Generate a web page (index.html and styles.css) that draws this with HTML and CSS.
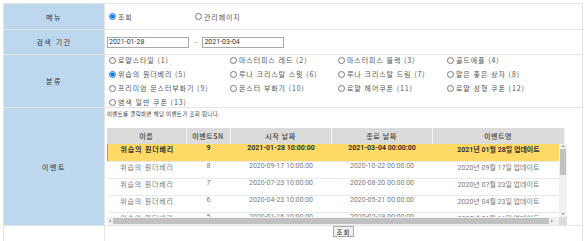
FILE: index.html
```html
<!DOCTYPE html>
<html lang="ko">
  <head>
    <meta charset="UTF-8">
    <title>이벤트 조회</title>
    <link rel="stylesheet" href="styles.css">
  </head>
  <body>
    <table class="frame">
      <tr class="row-menu">
        <th>메뉴</th>
        <td>
          <div class="menu-opts">
            <label class="opt"><input type="radio" name="menu" checked>조회</label>
            <label class="opt"><input type="radio" name="menu">관리페이지</label>
          </div>
        </td>
      </tr>
      <tr class="row-date">
        <th>검색 기간</th>
        <td>
          <div class="dates">
            <input type="text" class="date" value="2021-01-28">
            <span class="dash">-</span>
            <input type="text" class="date" value="2021-03-04">
          </div>
        </td>
      </tr>
      <tr class="row-cat">
        <th>분류</th>
        <td>
          <div class="cats">
            <label class="opt"><input type="radio" name="cat">로얄스타일 (1)</label>
            <label class="opt"><input type="radio" name="cat">마스터피스 레드 (2)</label>
            <label class="opt"><input type="radio" name="cat">마스터피스 블랙 (3)</label>
            <label class="opt"><input type="radio" name="cat">골드애플 (4)</label>
            <label class="opt"><input type="radio" name="cat" checked>위습의 원더베리 (5)</label>
            <label class="opt"><input type="radio" name="cat">루나 크리스탈 스윗 (6)</label>
            <label class="opt"><input type="radio" name="cat">루나 크리스탈 드림 (7)</label>
            <label class="opt"><input type="radio" name="cat">알은 좋은 상자 (8)</label>
            <label class="opt"><input type="radio" name="cat">프리미엄 몬스터부화기 (9)</label>
            <label class="opt"><input type="radio" name="cat">몬스터 부화기 (10)</label>
            <label class="opt"><input type="radio" name="cat">로얄 헤어쿠폰 (11)</label>
            <label class="opt"><input type="radio" name="cat">로얄 성형 쿠폰 (12)</label>
            <label class="opt"><input type="radio" name="cat">염색 일반 쿠폰 (13)</label>
          </div>
        </td>
      </tr>
      <tr class="row-event">
        <th>이벤트</th>
        <td>
          <p class="note">이벤트를 클릭하면 해당 이벤트가 조회 됩니다.</p>
          <div class="grid">
            <table class="grid-head">
              <colgroup>
                <col class="c-name"><col class="c-sn"><col class="c-start"><col class="c-end"><col class="c-title">
              </colgroup>
              <tr>
                <th>이름</th>
                <th>이벤트SN</th>
                <th>시작 날짜</th>
                <th>종료 날짜</th>
                <th>이벤트명</th>
              </tr>
            </table>
            <div class="grid-view">
              <div class="grid-clip">
                <table class="grid-body">
                  <colgroup>
                    <col class="c-name"><col class="c-sn"><col class="c-start"><col class="c-end"><col class="c-title">
                  </colgroup>
                  <tr class="selected">
                    <td>위습의 원더베리</td>
                    <td>9</td>
                    <td>2021-01-28 10:00:00</td>
                    <td>2021-03-04 00:00:00</td>
                    <td>2021년 01월 28일 업데이트</td>
                  </tr>
                  <tr>
                    <td>위습의 원더베리</td>
                    <td>8</td>
                    <td>2020-09-17 10:00:00</td>
                    <td>2020-10-22 00:00:00</td>
                    <td>2020년 09월 17일 업데이트</td>
                  </tr>
                  <tr>
                    <td>위습의 원더베리</td>
                    <td>7</td>
                    <td>2020-07-23 10:00:00</td>
                    <td>2020-08-20 00:00:00</td>
                    <td>2020년 07월 23일 업데이트</td>
                  </tr>
                  <tr>
                    <td>위습의 원더베리</td>
                    <td>6</td>
                    <td>2020-04-23 10:00:00</td>
                    <td>2020-05-21 00:00:00</td>
                    <td>2020년 04월 23일 업데이트</td>
                  </tr>
                  <tr>
                    <td>위습의 원더베리</td>
                    <td>5</td>
                    <td>2020-01-16 10:00:00</td>
                    <td>2020-02-19 00:00:00</td>
                    <td>2020년 01월 16일 업데이트</td>
                  </tr>
                </table>
              </div>
              <div class="vbar">
                <span class="arrow up"></span>
                <span class="vthumb"></span>
                <span class="arrow down"></span>
              </div>
            </div>
            <div class="hbar">
              <span class="arrow left"></span>
              <span class="hthumb"></span>
              <span class="arrow right"></span>
              <span class="corner"></span>
            </div>
          </div>
        </td>
      </tr>
      <tr class="row-btn">
        <th class="blank"></th>
        <td><button class="search">조회</button></td>
      </tr>
    </table>
  </body>
</html>
```

FILE: styles.css
```css
body {
  margin: 0;
  padding: 3px;
  font-family: "Noto Sans CJK KR", "Noto Sans", sans-serif;
  font-size: 7px;
  color: #444;
  background: #fff;
}
.frame {
  width: 580px;
  border-collapse: collapse;
}
.frame > tbody > tr > th,
.frame > tbody > tr > td {
  border: 1px solid #e4e4e4;
  padding: 0 2px;
}
.frame > tbody > tr > th {
  width: 96px;
  background: #bdd7ee;
  font-weight: normal;
  color: #333;
  letter-spacing: 1.5px;
}
.frame > tbody > tr > th.blank {
  background: #fff;
}
.row-menu { height: 26px; }
.row-date { height: 25px; }
.row-cat { height: 53px; }
.row-event { height: 117px; }
.row-btn { height: 17px; }
.row-btn td {
  text-align: center;
  padding-top: 2px;
  vertical-align: top;
}

.opt {
  display: flex;
  align-items: center;
  letter-spacing: 0.9px;
  color: #555;
  white-space: nowrap;
}
.opt input {
  width: 7px;
  height: 7px;
  margin: 0 2px 0 2px;
}
.menu-opts {
  display: grid;
  grid-template-columns: 86px auto;
}
.cats {
  display: grid;
  grid-template-columns: 121px 108px 109px auto;
  row-gap: 4px;
}

.dates {
  display: flex;
  align-items: center;
}
.date {
  width: 82px;
  height: 11px;
  box-sizing: border-box;
  border: 1px solid #a9a9a9;
  padding: 0 1px;
  font-family: "Roboto", "Noto Sans", sans-serif;
  font-size: 7px;
  color: #333;
}
.dash {
  margin: 0 5px 0 6px;
  color: #555;
}

.row-event td {
  vertical-align: top;
}
.note {
  margin: 2px 0 10px;
  font-size: 5.5px;
  letter-spacing: 0.3px;
  color: #333;
}
.grid {
  width: 460px;
}
.grid table {
  border-collapse: collapse;
  table-layout: fixed;
  width: 457px;
}
.c-name { width: 79px; }
.c-sn { width: 44px; }
.c-start { width: 101px; }
.c-end { width: 101px; }
.c-title { width: 132px; }
.grid-head th {
  height: 16px;
  padding: 0;
  background: #dbdbdb;
  border-right: 1px solid #f4f4f4;
  font-weight: 500;
  color: #444;
  letter-spacing: 0.6px;
}
.grid-view {
  display: flex;
  height: 73px;
}
.grid-clip {
  width: 452px;
  overflow: hidden;
}
.grid-body tr {
  height: 17px;
}
.grid-body td {
  padding: 0;
  text-align: center;
  border-bottom: 1px solid #e8e8e8;
  color: #7a7a7a;
  font-family: "Roboto", "Noto Sans CJK KR", sans-serif;
  white-space: nowrap;
}
.grid-body tr td:first-child {
  font-family: "Noto Sans CJK KR", sans-serif;
  letter-spacing: 0.8px;
}
.grid-body tr.selected td {
  background: #ffd966;
  color: #333;
  font-weight: bold;
}
.grid-body tr.selected td:first-child {
  border-left: 1px solid #8fa9a3;
}

.vbar {
  width: 8px;
  background: #f1f1f1;
  display: flex;
  flex-direction: column;
  align-items: center;
}
.vthumb {
  width: 6px;
  height: 26px;
  margin-top: 1px;
  background: #c1c1c1;
}
.hbar {
  display: flex;
  align-items: center;
  height: 8px;
  background: #f1f1f1;
}
.hthumb {
  flex: 1;
  height: 6px;
  margin: 0 1px;
  background: #c1c1c1;
}
.corner {
  width: 8px;
  height: 8px;
  margin-left: 4px;
  background: #dcdcdc;
}
.arrow {
  width: 0;
  height: 0;
  border: 2px solid transparent;
}
.arrow.up {
  margin: 1px 0 1px;
  border-bottom-color: #a3a3a3;
  border-top-width: 0;
}
.arrow.down {
  margin-top: auto;
  margin-bottom: 2px;
  border-top-color: #a3a3a3;
  border-bottom-width: 0;
}
.arrow.left {
  margin: 0 1px 0 2px;
  border-right-color: #a3a3a3;
  border-left-width: 0;
}
.arrow.right {
  margin: 0 2px 0 1px;
  border-left-color: #a3a3a3;
  border-right-width: 0;
}

.search {
  font-family: "Noto Sans CJK KR", sans-serif;
  font-size: 6.5px;
  letter-spacing: 1px;
  height: 11px;
  width: 21px;
  padding: 0;
  border: 1px solid #aaa;
  background: #f0f0f0;
  color: #333;
}
```
